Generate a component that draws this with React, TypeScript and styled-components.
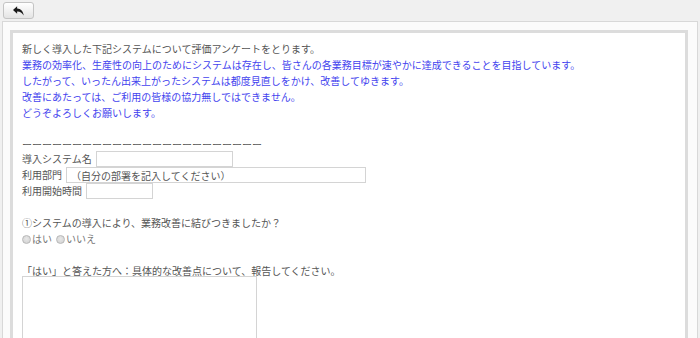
import React from "react";
import styled, { createGlobalStyle } from "styled-components";

const Global = createGlobalStyle`
  html, body { margin: 0; padding: 0; }
  body {
    background: #f0f0f0;
    font-family: "Noto Sans CJK JP", "Noto Sans", sans-serif;
    overflow: hidden;
  }
`;

const Page = styled.div`
  width: 700px;
  height: 338px;
  display: flex;
  flex-direction: column;
`;

const Toolbar = styled.div`
  height: 20px;
  padding: 2px 3px 0;
  box-sizing: border-box;
  display: flex;
  align-items: flex-start;
`;

const BackButton = styled.button`
  width: 31px;
  height: 17px;
  padding: 0;
  border: 1px solid #c4c4c4;
  border-radius: 3px;
  background: linear-gradient(#ffffff, #e4e4e4);
  display: flex;
  align-items: center;
  justify-content: center;
  color: #222;
`;

const Outer = styled.div`
  flex: 1;
  margin: 1px 2px 0 2px;
  border: 1px solid #d8d8d8;
  border-bottom: none;
  background: #fbfbfb;
  padding: 8px 9px 0 7px;
  display: flex;
  flex-direction: column;
  overflow: hidden;
`;

const Inner = styled.div`
  flex: 1;
  border: 3px solid #dcdcdc;
  border-bottom: none;
  background: #ffffff;
  padding: 8px 9px 0;
  font-size: 10px;
  line-height: 16px;
  color: #555;
`;

const Line = styled.div<{ $blue?: boolean; $h?: number }>`
  height: ${(p) => p.$h ?? 16}px;
  white-space: nowrap;
  color: ${(p) => (p.$blue ? "#4343ee" : "#555")};
`;

const Row = styled.div`
  height: 16px;
  display: flex;
  align-items: center;
  white-space: nowrap;
`;

const TextInput = styled.input<{ $w: number }>`
  width: ${(p) => p.$w}px;
  height: 16px;
  box-sizing: border-box;
  margin: 0 0 0 4px;
  padding: 0 4px;
  border: 1px solid #d4d4d4;
  font-family: inherit;
  font-size: 10px;
  color: #555;
  background: #fff;
  outline: none;
`;

const Radio = styled.span`
  display: inline-block;
  width: 9px;
  height: 9px;
  border-radius: 50%;
  border: 1px solid #b8b8b8;
  background: radial-gradient(circle at 50% 40%, #e8e8e8, #cfcfcf);
  box-sizing: border-box;
  margin-right: 1px;
`;

const RadioLabel = styled.span`
  color: #777;
  margin-right: 4px;
`;

const TextArea = styled.textarea`
  display: block;
  width: 235px;
  height: 80px;
  margin: 0;
  box-sizing: border-box;
  border: 1px solid #d4d4d4;
  resize: none;
  outline: none;
`;

const Spacer = styled.div`
  height: 16px;
`;

export default function App() {
  return (
    <Page>
      <Global />
      <Toolbar>
        <BackButton aria-label="back">
          <svg width="11" height="10" viewBox="0 0 16 14">
            <path d="M6 0 L0 5.5 L6 11 L6 7.6 C10 7.4 13 8.8 15.5 13.5 C15 7.5 11.5 3.8 6 3.4 Z" fill="#1a1a1a" />
          </svg>
        </BackButton>
      </Toolbar>
      <Outer>
        <Inner>
          <Line>新しく導入した下記システムについて評価アンケートをとります。</Line>
          <Line $blue>業務の効率化、生産性の向上のためにシステムは存在し、皆さんの各業務目標が速やかに達成できることを目指しています。</Line>
          <Line $blue>したがって、いったん出来上がったシステムは都度見直しをかけ、改善してゆきます。</Line>
          <Line $blue>改善にあたっては、ご利用の皆様の協力無しではできません。</Line>
          <Line $blue>どうぞよろしくお願いします。</Line>
          <Spacer />
          <Line $h={14}>ーーーーーーーーーーーーーーーーーーーーーーーー</Line>
          <Row>
            導入システム名<TextInput $w={137} defaultValue="" />
          </Row>
          <Row>
            利用部門<TextInput $w={300} defaultValue="（自分の部署を記入してください）" />
          </Row>
          <Row>
            利用開始時間<TextInput $w={67} defaultValue="" />
          </Row>
          <Spacer />
          <Line>①システムの導入により、業務改善に結びつきましたか？</Line>
          <Row>
            <Radio />
            <RadioLabel>はい</RadioLabel>
            <Radio />
            <RadioLabel>いいえ</RadioLabel>
          </Row>
          <Spacer />
          <Line $h={13}>「はい」と答えた方へ：具体的な改善点について、報告してください。</Line>
          <TextArea />
        </Inner>
      </Outer>
    </Page>
  );
}
